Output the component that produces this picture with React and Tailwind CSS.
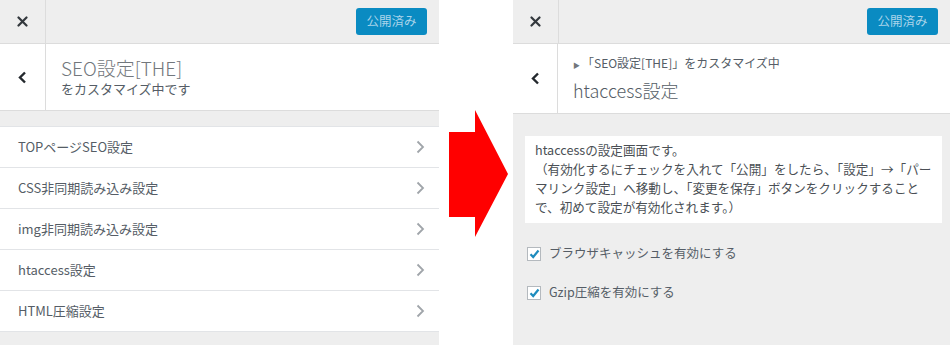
import React from "react";

const font = { fontFamily: '"Noto Sans CJK JP", "Noto Sans", sans-serif' };

function CloseIcon() {
  return (
    <svg width="11" height="11" viewBox="0 0 11 11">
      <path d="M1.5 1.5 L9.5 9.5 M9.5 1.5 L1.5 9.5" stroke="#32373c" strokeWidth="2.2" strokeLinecap="round" />
    </svg>
  );
}

function BackIcon() {
  return (
    <svg width="9" height="13" viewBox="0 0 9 13">
      <path d="M7 1.5 L2 6.5 L7 11.5" fill="none" stroke="#23282d" strokeWidth="2.4" />
    </svg>
  );
}

function ChevronRight() {
  return (
    <svg width="9" height="14" viewBox="0 0 9 14">
      <path d="M1.5 1.5 L7 7 L1.5 12.5" fill="none" stroke="#a0a5aa" strokeWidth="1.8" />
    </svg>
  );
}

function TopBar() {
  return (
    <div className="flex h-[44px] shrink-0 border-b border-[#dcdcdc] bg-[#eeeeee]">
      <div className="flex w-[46px] items-center justify-center border-r border-[#dcdcdc]">
        <CloseIcon />
      </div>
      <div className="flex flex-1 items-center justify-end pr-[12px]">
        <div className="flex h-[27px] w-[71px] items-center justify-center rounded-[3px] bg-[#0a8bc2] text-[12.5px] text-[#a9d4ea]">
          公開済み
        </div>
      </div>
    </div>
  );
}

function ListRow({ label }) {
  return (
    <div className="flex h-[41px] items-center justify-between border-b border-[#e2e4e7] bg-white pl-[18px] pr-[14px]">
      <span className="text-[13px] text-[#555d66]">{label}</span>
      <ChevronRight />
    </div>
  );
}

function CheckRow({ label }) {
  return (
    <div className="flex h-[19px] items-center gap-[8px]">
      <div className="flex h-[14px] w-[14px] items-center justify-center border border-[#b4b9be] bg-white">
        <svg width="11" height="10" viewBox="0 0 11 10">
          <path d="M1.5 5.2 L4.2 8 L9.5 1.5" fill="none" stroke="#1e8cbe" strokeWidth="2.2" />
        </svg>
      </div>
      <span className="text-[12.5px] text-[#555d66]">{label}</span>
    </div>
  );
}

export default function App() {
  return (
    <div className="flex h-[345px] w-[950px] overflow-hidden bg-white" style={font}>
      {/* Left panel */}
      <div className="flex w-[439px] shrink-0 flex-col bg-[#eeeeee]">
        <TopBar />
        <div className="flex h-[67px] shrink-0 border-b border-[#dcdcdc] bg-white">
          <div className="flex w-[46px] items-center justify-center border-r border-[#dcdcdc]">
            <BackIcon />
          </div>
          <div className="flex flex-col justify-center pl-[15px] pb-[2px]">
            <div className="text-[19px] leading-[25px] font-light text-[#72777c]">SEO設定[THE]</div>
            <div className="text-[13px] leading-[18px] text-[#555d66]">をカスタマイズ中です</div>
          </div>
        </div>
        <div className="mt-[15px] border-t border-[#e2e4e7]">
          <ListRow label="TOPページSEO設定" />
          <ListRow label="CSS非同期読み込み設定" />
          <ListRow label="img非同期読み込み設定" />
          <ListRow label="htaccess設定" />
          <ListRow label="HTML圧縮設定" />
        </div>
      </div>

      {/* Arrow */}
      <div className="w-[74px] shrink-0 pl-[10px] pt-[110px]">
        <svg width="60" height="128" viewBox="0 0 60 128">
          <polygon points="0,22 26,22 26,0 59,64 26,127 26,107 0,107" fill="#ff0000" />
        </svg>
      </div>

      {/* Right panel */}
      <div className="flex w-[437px] shrink-0 flex-col bg-[#eeeeee]">
        <TopBar />
        <div className="flex h-[70px] shrink-0 border-b border-[#dcdcdc] bg-white">
          <div className="flex w-[45px] items-center justify-center border-r border-[#dcdcdc]">
            <BackIcon />
          </div>
          <div className="flex flex-col justify-center pl-[15px] pb-[1px]">
            <div className="text-[12px] leading-[18px] text-[#555d66]">
              <span className="mr-[2px] text-[7px] text-[#72777c]">▶</span>「SEO設定[THE]」をカスタマイズ中
            </div>
            <div className="mt-[4px] text-[18px] leading-[24px] font-light text-[#555d66]">htaccess設定</div>
          </div>
        </div>
        <div className="pl-[12px] pr-[8px] pt-[22px]">
          <div className="bg-white px-[10px] pt-[4px] pb-[7px] text-[12.6px] leading-[19px] whitespace-nowrap text-[#4a4f55]">
            htaccessの設定画面です。
            <br />
            （有効化するにチェックを入れて「公開」をしたら、「設定」→「パー
            <br />
            マリンク設定」へ移動し、「変更を保存」ボタンをクリックすること
            <br />
            で、初めて設定が有効化されます。）
          </div>
          <div className="mt-[21px] flex flex-col gap-[20px] pl-[2px]">
            <CheckRow label="ブラウザキャッシュを有効にする" />
            <CheckRow label="Gzip圧縮を有効にする" />
          </div>
        </div>
      </div>
    </div>
  );
}
